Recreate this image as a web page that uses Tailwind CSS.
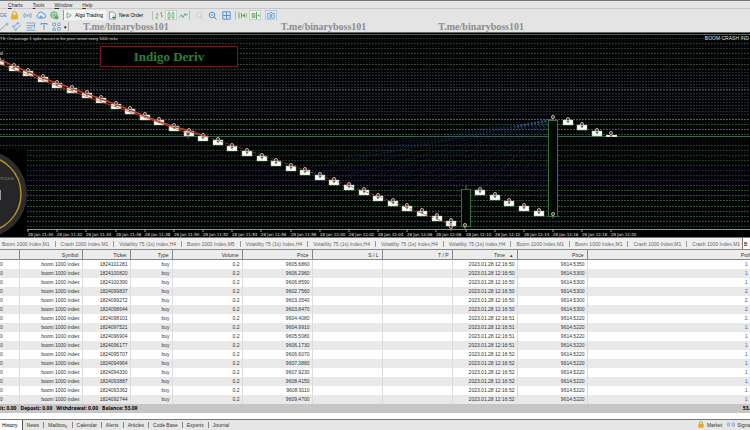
<!DOCTYPE html>
<html lang="en">
<head>
    <meta charset="UTF-8">
    <meta name="viewport" content="width=device-width, initial-scale=1.0">
    <title>Boom 1000 Index,M1</title>
    <script src="https://cdn.jsdelivr.net/npm/@tailwindcss/browser@4"></script>
</head>
<body class="bg-[#e4e4e4] font-['Liberation_Sans',sans-serif] text-[5px] leading-[8px] text-[#333] overflow-hidden">
<div class="flex flex-col min-h-screen">

  <!-- Menu -->
  <nav class="flex items-center gap-[10px] h-[9px] pl-2 border-t border-[#777] border-b border-b-[#c8c8c8]">
    <a href="#"><u>C</u>harts</a>
    <a href="#"><u>T</u>ools</a>
    <a href="#"><u>W</u>indow</a>
    <a href="#"><u>H</u>elp</a>
  </nav>

  <!-- Main toolbar -->
  <div class="flex items-center h-3 text-black">
    <button class="w-[7px] text-left text-[#4a86c0]" aria-label="IDE">DE</button>
    <button class="w-[14px] flex justify-center" aria-label="Market">
      <svg class="w-[9px] h-[9px]" viewBox="0 0 9 9"><path d="M2.5 4V2.5a2 2 0 0 1 4 0V4" fill="none" stroke="#d9a520"/><rect x="1" y="3.4" width="7" height="5.2" rx=".8" fill="#e8b32c"/></svg>
    </button>
    <button class="w-[13px] flex justify-center" aria-label="Signals">
      <svg class="w-[9px] h-[9px]" viewBox="0 0 9 9" fill="none" stroke="#5b97c9" stroke-width=".8"><path d="M1.500 2Q0 4.500 1.500 7M3 3Q2 4.500 3 6M7.500 2Q9 4.500 7.500 7M6 3Q7 4.500 6 6"/><circle cx="4.500" cy="4.500" r=".6"/></svg>
    </button>
    <button class="w-[13px] flex justify-center" aria-label="VPS">
      <svg class="w-[10px] h-[9px]" viewBox="0 0 10 9"><path d="M2.500 7A2 2 0 0 1 2 3.300 3 3 0 0 1 7.700 3 2 2 0 0 1 7.800 7Z" fill="#d8ebfa" stroke="#4a90cc" stroke-width=".9"/><circle cx="5" cy="6" r="1.600" fill="#6aa8dc"/></svg>
    </button>
    <button class="w-[14px] flex justify-center" aria-label="Network">
      <svg class="w-[9px] h-[9px]" viewBox="0 0 9 9"><circle cx="4" cy="4" r="3.300" fill="#bfe0c6" stroke="#55a868" stroke-width=".8"/><path d="M1 4h6M4 1v6" stroke="#55a868" stroke-width=".6"/><circle cx="6.500" cy="6.500" r="2" fill="#58ae6a"/></svg>
    </button>
    <button class="flex items-center gap-[3px] w-[43px] h-[10px] ml-[2px] pl-[2px] border-l border-[#999] bg-[#f4f4f4]">
      <svg class="w-[6px] h-[7px]" viewBox="0 0 6 7"><path d="M1 1l4.300 2.500L1 6z" fill="#e9f6ec" stroke="#4caf60" stroke-width=".8"/></svg>
      Algo Trading
    </button>
    <button class="flex items-center gap-[2px] w-11 ml-[2px]">
      <svg class="w-[9px] h-[9px]" viewBox="0 0 9 9"><path d="M1.500 1h4l2 2v5h-6z" fill="#eef5fb" stroke="#5b86a8" stroke-width=".7"/><path d="M4 6.500h4M6 4.500v4" stroke="#3d9a50"/></svg>
      New Order
    </button>
    <span class="w-px h-[9px] bg-[#bbb]"></span>
    <button class="w-3 flex justify-center" aria-label="Bars">
      <svg class="w-[9px] h-[9px]" viewBox="0 0 9 9" fill="none" stroke="#58ae6a" stroke-width=".8"><path d="M2 2v6M.500 7H2M2 3h1.500M6.500 1v5M5 2h1.500M6.500 5H8"/></svg>
    </button>
    <button class="w-3 h-[10px] flex justify-center items-center bg-[#f1f5f1] border border-[#ccc]" aria-label="Candles">
      <svg class="w-[8px] h-[9px]" viewBox="0 0 8 9" fill="none" stroke="#58ae6a" stroke-width=".8"><path d="M2 .500v8M6 .500v8"/><path d="M1 2h2v5H1zM5 2h2v4.500H5z" fill="#e6f5e9"/></svg>
    </button>
    <button class="w-3 flex justify-center" aria-label="Line">
      <svg class="w-[9px] h-[9px]" viewBox="0 0 9 9" fill="none" stroke="#58ae6a" stroke-width=".9"><path d="M.500 6.500l2-3 1.500 3 2-4 1 2 1.500-2"/></svg>
    </button>
    <span class="w-px h-[9px] bg-[#bbb]"></span>
    <button class="w-[18px] flex justify-center" aria-label="Zoom in">
      <svg class="w-[9px] h-[9px]" viewBox="0 0 9 9" fill="none" stroke="#c6ced2"><circle cx="4" cy="4" r="2.800"/><path d="M6 6l2.500 2.500"/></svg>
    </button>
    <button class="w-[9px] flex justify-center" aria-label="Zoom out">
      <svg class="w-[9px] h-[9px]" viewBox="0 0 9 9" fill="none" stroke="#4a90cc"><circle cx="4" cy="4" r="2.800" fill="#dcecf8"/><path d="M6 6l2.500 2.500M2.700 4h2.600"/></svg>
    </button>
    <button class="w-[18px] flex justify-center" aria-label="Tile">
      <svg class="w-[9px] h-[9px]" viewBox="0 0 9 9"><path d="M.800 .800h7.400v7.400H.800zM4.500 1v7M1 4.500h7" fill="#d5e8f6" stroke="#4a90cc" stroke-width=".9"/></svg>
    </button>
    <span class="w-px h-[9px] bg-[#bbb]"></span>
    <button class="w-[13px] flex justify-center" aria-label="Auto scroll">
      <svg class="w-[9px] h-[9px]" viewBox="0 0 9 9"><path d="M1 1.500v6M3.500 2v5" stroke="#58ae6a"/><path d="M4 4.500l3-2v4z" fill="#58ae6a"/><path d="M8.300 2v5" stroke="#58ae6a" stroke-width=".7"/></svg>
    </button>
    <button class="w-3 h-[10px] flex justify-center items-center bg-[#f1f5f1] border border-[#ccc]" aria-label="Shift">
      <svg class="w-[9px] h-[9px]" viewBox="0 0 9 9"><path d="M1 2.500h3v4H1z" fill="#9fd0a9" stroke="#58ae6a" stroke-width=".7"/><path d="M5.500 1v7" stroke="#58ae6a"/><path d="M6.500 4.500l2-1.500v3z" fill="#4a90cc"/></svg>
    </button>
    <button class="w-3 h-[10px] ml-1 flex justify-center items-center bg-[#dcebf6] border border-[#b5cbdc]" aria-label="Screenshot">
      <svg class="w-[8px] h-[8px]" viewBox="0 0 8 8"><path d="M.700 2.500h1.800l.700-1h1.600l.700 1h1.800v4.500H.700z" fill="#e9f3fb" stroke="#4a90cc" stroke-width=".8"/><circle cx="4" cy="4.600" r="1.300" fill="#8abbe0" stroke="#4a90cc" stroke-width=".6"/></svg>
    </button>
  </div>

  <!-- Drawing toolbar -->
  <div class="flex items-center h-[11px]">
    <button class="w-[10px]" aria-label="Trend line">
      <svg class="w-[9px] h-[9px]" viewBox="0 0 9 9" stroke="#5b97c9" fill="#fff" stroke-width=".8"><path d="M0 8L7 2"/><circle cx="7" cy="2" r="1"/></svg>
    </button>
    <button class="w-[14px] flex justify-center" aria-label="Channel">
      <svg class="w-[10px] h-[9px]" viewBox="0 0 10 9" stroke="#5b97c9" fill="#fff" stroke-width=".8"><path d="M1 5l5-4M3 8l6-5"/><circle cx="1.500" cy="4.700" r=".9"/><circle cx="6" cy="1.300" r=".9"/><circle cx="3.500" cy="7.600" r=".9"/></svg>
    </button>
    <button class="w-[14px] flex justify-center" aria-label="Fibonacci">
      <svg class="w-[10px] h-[9px]" viewBox="0 0 10 9" stroke="#5b97c9" fill="none" stroke-width=".8"><path d="M.500 1h9M.500 3.500h8M.500 5.800h6M.500 8.200h9M8.500 2v4"/></svg>
    </button>
    <button class="w-3 flex justify-center" aria-label="Text">
      <svg class="w-[8px] h-[9px]" viewBox="0 0 8 9" stroke="#5b97c9" fill="none"><path d="M1 3V1.500h6V3M4 1.500V8"/></svg>
    </button>
    <button class="w-3 flex justify-center" aria-label="Shapes">
      <svg class="w-[9px] h-[9px]" viewBox="0 0 9 9" stroke="#5b97c9" fill="#dcecf8" stroke-width=".8"><path d="M.700 1h2.800v2.600H.700zM5.500 5.500h2.800v2.600H5.500z"/><circle cx="7" cy="2.300" r="1.400"/><path d="M2.200 5.300l1.600 2.900H.600z"/></svg>
    </button>
    <span class="w-[6px] text-center text-black">▾</span>
    <span class="w-px h-[9px] bg-[#aaa]"></span>
    <div class="flex ml-[14px] font-['Liberation_Serif',serif] font-bold text-[10px] text-[#8c8c8c]">
      <span>T.me/binaryboss101</span>
      <span class="ml-28">T.me/binaryboss101</span>
      <span class="ml-[72px]">T.me/binaryboss101</span>
    </div>
  </div>

  <!-- Chart -->
  <main class="bg-black border-t border-[#666]">
    <svg id="chart" class="block w-full" viewBox="0 33 750 204" font-family="Liberation Sans, sans-serif">
      <defs>
        <pattern id="dots" width="3" height="3" patternUnits="userSpaceOnUse"><rect width="2" height="1" fill="#262a34"/></pattern>
        <pattern id="cols" width="3" height="2" patternUnits="userSpaceOnUse"><rect width="1" height="1" fill="#10161a"/></pattern>
      </defs>
      <rect y="33" width="750" height="197" fill="url(#cols)"/>
      <rect y="68" width="750" height="48" fill="url(#dots)"/>
      <g id="levels" fill="none"></g>
      <path d="M0 34.500H750" stroke="#555f58"/>
      <path d="M0 136.500H750" stroke="#3f6350"/>
      <g id="fan" stroke="#22386a" stroke-width=".6" stroke-dasharray="1.500 2" fill="none"></g>
      <g id="candles"></g>
      <path d="M0 60L40 77 115 104 160 122 205 136" stroke="#c0402c" stroke-width="1.400" fill="none"/>
      <path d="M0 64L60 87 130 112 190 134" stroke="#d8502e" stroke-width=".7" fill="none"/>
      <path d="M205 136L305 170 380 197 452 225" stroke="#a8402e" stroke-width=".7" stroke-dasharray="5 2" fill="none"/>
      <g id="marks"></g>

      <rect x="100.500" y="46.500" width="137" height="20" fill="#000" stroke="#6b1c22"/>
      <text x="169" y="61" text-anchor="middle" font-family="Liberation Serif, serif" font-weight="bold" font-size="13" fill="#2c8038">Indigo Deriv</text>
      <text x="0" y="40" font-size="4" fill="#ddd">TS:  On average 1 spike occurs in the price series every 1000 ticks</text>
      <text x="749" y="40" text-anchor="end" font-size="5" fill="#ddd">BOOM CRASH IND</text>
      <text x="0" y="55" font-size="5" fill="#ddd">d</text>

      <!-- Badge -->
      <rect y="150" width="27" height="88" fill="#000"/>
      <circle cx="-17" cy="194" r="44" fill="#2d2d2f"/>
      <circle cx="-17" cy="194" r="38" fill="#262628" stroke="#b8962c" stroke-width="1.400"/>
      <text x="0" y="180" font-size="4" fill="#b8962c">TOOLS</text>
      <path d="M0 190v10" stroke="#999" stroke-width="2"/>

      <path d="M27 229.500H750" stroke="#8c928e"/>
      <g id="axis" font-family="DejaVu Sans, sans-serif" font-size="4" fill="#e0e0e0" stroke="none"></g>
    </svg>
  </main>

  <!-- Chart tabs -->
  <div id="chartTabs" class="flex items-center h-3 pl-[2px] border-t border-[#777] bg-[#efefef] text-[#666] whitespace-nowrap overflow-hidden"></div>

  <!-- History -->
  <table class="w-full table-fixed border-collapse bg-white whitespace-nowrap">
    <colgroup>
      <col class="w-[19px]"><col class="w-[63px]"><col class="w-[48px]"><col class="w-[42px]"><col class="w-[70px]"><col class="w-[70px]"><col class="w-[70px]"><col class="w-[70px]"><col class="w-[65px]"><col class="w-[70px]"><col>
    </colgroup>
    <thead>
      <tr class="h-[10px] bg-[#ececec] border-y border-[#888] text-right *:font-normal *:p-0 *:pr-[3px] *:border-r *:border-[#888]">
        <th></th><th>Symbol</th><th>Ticket</th><th>Type</th><th>Volume</th><th>Price</th><th>S / L</th><th>T / P</th><th>Time &nbsp; &nbsp;▴</th><th>Price</th><th class="pr-0! border-r-0!">Prof</th>
      </tr>
    </thead>
    <tbody id="deals"></tbody>
  </table>

  <div class="flex items-center gap-1 h-[9px] bg-[#c6c6c6] font-['Open_Sans',sans-serif] font-bold text-black">
    <span>it: 0.00</span>
    <span>Deposit: 0.00</span>
    <span>Withdrawal: 0.00</span>
    <span>Balance: 53.09</span>
    <span class="ml-auto">53.</span>
  </div>
  <div class="h-[6px] bg-white"></div>

  <!-- Toolbox tabs -->
  <footer class="flex items-center grow border-t border-[#777] bg-[#e6e6e6]">
    <div id="boxTabs" class="flex items-center"></div>
    <a href="#" class="flex items-center gap-[3px] ml-auto">
      <svg class="w-[6px] h-[7px]" viewBox="0 0 6 7"><path d="M1.500 3V2a1.500 1.500 0 0 1 3 0v1" fill="none" stroke="#c99a20" stroke-width=".8"/><rect x=".300" y="2.700" width="5.400" height="4" rx=".5" fill="#e0ad30"/></svg>
      Market
    </a>
    <a href="#" class="flex items-center gap-[2px] ml-[5px]">
      <svg class="w-[8px] h-[7px]" viewBox="0 0 8 7" fill="none" stroke="#5b97c9" stroke-width=".8"><path d="M1.300 1Q0 3.500 1.300 6M2.800 2Q2 3.500 2.800 5M6.700 1Q8 3.500 6.700 6M5.200 2Q6 3.500 5.200 5"/></svg>
      Signa
    </a>
  </footer>
</div>

<script>
const byId = (id) => document.getElementById(id);

// Price levels
const levels = [
  [38, '#28332c'], [43, '#2a352e'], [48, '#2d3831'], [53.500, '#2d3831'], [58.500, '#2d3831'], [64, '#39463e'],
  [89.500, '#39434a'], [119.500, '#3f6b3c'], [124.500, '#30502f'], [129.500, '#3a5f3c'],
  [134.500, '#2c4a38'], [145, '#1f3526'], [150.500, '#25402b'], [155, '#1d3325'], [160, '#25402b'],
  [165.500, '#1e1e48'], [170.500, '#1e1e48'], [175.500, '#25254f'], [180.500, '#2a2a50'],
  [185, '#263a30'], [190, '#31503a'], [195, '#2c4a38'], [200.500, '#30533a'], [206, '#335a36'],
  [211, '#2a4a2f'], [216, '#30533a'], [221, '#2a4a2f'], [226.500, '#25402b'],
];
byId('levels').innerHTML = levels.map(([y, color]) =>
  `<path d="M0 ${Math.floor(y) + 0.5}H750" stroke="${color}" stroke-dasharray="2 1"/>`).join('');

// One candle a minute, by the middle of its body
const closes = [62, 68, 73, 79, 85, 90, 95, 100, 106, 111, 117, 122, 128, 133, 138, 142, 148, 153, 158, 163, 168, 172, 177, 182, 187, 192, 198, 203, 208, 213, 218, 223, null, 192, 197, 203, 208, 213, null, 122, 127, 133, 136];
const step = 14.580;
let candles = '', marks = '', fan = '';
closes.forEach((y, i) => {
  const x = Math.round(-0.900 + i * step);
  if (y === null) {
    const [top, bottom] = i === 32 ? [189, 226] : [120, 216];
    candles += `<path d="M${x} ${top - 4}v4" stroke="#3f8a45"/><rect x="${x - 4.500}" y="${top + 0.500}" width="9" height="${bottom - top}" fill="#020604" stroke="#35703a"/>`;
    return;
  }
  const last = i === closes.length - 1;
  candles += last
    ? `<rect x="${x - 5}" y="135" width="11" height="2" fill="#d8efdc"/>`
    : `<rect x="${x - 5}" y="${y - 2}" width="10" height="5" fill="#fbfff8" stroke="#8fbf90" stroke-width=".5"/>`;
  marks += mark(x, y - 3);
  if (i > 20 && i < 38) fan += `<path d="M553 120L${x} ${y - 3}"/>`;
});
marks += mark(553, 117) + mark(553, 214) + mark(465, 225) + mark(451, 227) + mark(188, 134);
function mark(x, y) {
  return `<circle cx="${x}" cy="${y}" r="1.600" fill="#4a3a3a" stroke="#c9a9a6" stroke-width=".9"/><path d="M${x - 1.500} ${y + 2}h3l-1.500 2.500z" fill="#666"/>`;
}
byId('candles').innerHTML = candles;
byId('marks').innerHTML = marks;
for (let y = 121; y < 150; y += 6) fan += `<path d="M553 120L${400 - (y - 121) * 3} ${y + 18}"/>`;
byId('fan').innerHTML = fan + '<path d="M553 119L515 127" stroke="#315f9c" stroke-width="2"/>';

let axis = '';
for (let i = 0; i <= 20; i++) {
  const min = 40 + i * 2;
  const time = `${min < 60 ? 11 : 12}:${String(min % 60).padStart(2, '0')}`;
  const x = 28 + Math.round(i * 29.170);
  axis += `<text x="${x}" y="236">28 Jan ${time}</text><path d="M${x} 230v2" stroke="#999"/>`;
}
byId('axis').innerHTML = axis;

// Chart tabs
const V = 'Volatility 75 (1s) Index,H4', B = 'Boom 1000 Index,M1', C = 'Crash 1000 Index,M1';
byId('chartTabs').innerHTML = [B, C, V, 'Boom 1000 Index,M5', V, V, V, V, B, B, C, C].map((t, i, all) =>
  `<button>${t}</button>` + (i < all.length - 1 ? '<span class="shrink-0 w-px h-[6px] mx-[5px] bg-[#999]"></span>' : '')).join('') +
  '<button class="grow text-left ml-[2px] pl-px h-[11px] bg-white border-l border-[#777] text-black">B</button>';

// Deals
const deals = [
  ['1824101281', '9605.6860', 50, '9614.5350', '1.'], ['1824100820', '9606.2960', 50, '9614.5300', '1.'],
  ['1824100390', '9606.8590', 50, '9614.5300', '1.'], ['1824099837', '9602.7560', 50, '9614.5300', '2.'],
  ['1824099272', '9603.3540', 50, '9614.5300', '2.'], ['1824098644', '9603.8470', 50, '9614.5300', '2.'],
  ['1824098101', '9604.4080', 51, '9614.5220', '2.'], ['1824097521', '9604.9910', 51, '9614.5220', '1.'],
  ['1824096904', '9605.5080', 51, '9614.5220', '1.'], ['1824096177', '9606.1730', 51, '9614.5220', '1.'],
  ['1824095707', '9606.6070', 52, '9614.5220', '1.'], ['1824094964', '9607.3880', 52, '9614.5220', '1.'],
  ['1824094330', '9607.9230', 52, '9614.5220', '1.'], ['1824093887', '9608.4150', 52, '9614.5220', '1.'],
  ['1824093362', '9608.9110', 52, '9614.5220', '1.'], ['1824092744', '9609.4700', 52, '9614.5220', '1.'],
];
byId('deals').innerHTML = deals.map(([ticket, open, sec, close, profit]) =>
  `<tr class="h-[9px] even:bg-[#e9e9e9] text-right *:p-0 *:pr-[2px] *:border-r *:border-[#dcdcdc]">
    <td class="text-left">0</td><td>boom 1000 index</td><td>${ticket}</td><td>buy</td><td>0.2</td><td>${open}</td><td></td><td></td><td>2023.01.28 12:16:${sec}</td><td>${close}</td><td class="border-r-0! pr-px! text-[#4a5ab0]">${profit}</td>
  </tr>`).join('');

// Toolbox tabs
byId('boxTabs').innerHTML = ['News', 'Mailbox', 'Calendar', 'Alerts', 'Articles', 'Code Base', 'Experts', 'Journal'].reduce((html, t, i) =>
  html + (i ? '<span class="w-px h-[6px] bg-[#888] mx-1"></span>' : '') + `<button>${t}${t === 'Mailbox' ? '<sub class="text-[4px] text-red-600">6</sub>' : ''}</button>`,
  '<button class="h-[10px] pl-[2px] pr-1 mr-1 bg-white border-r border-[#555] text-black">History</button>');
</script>
</body>
</html>
